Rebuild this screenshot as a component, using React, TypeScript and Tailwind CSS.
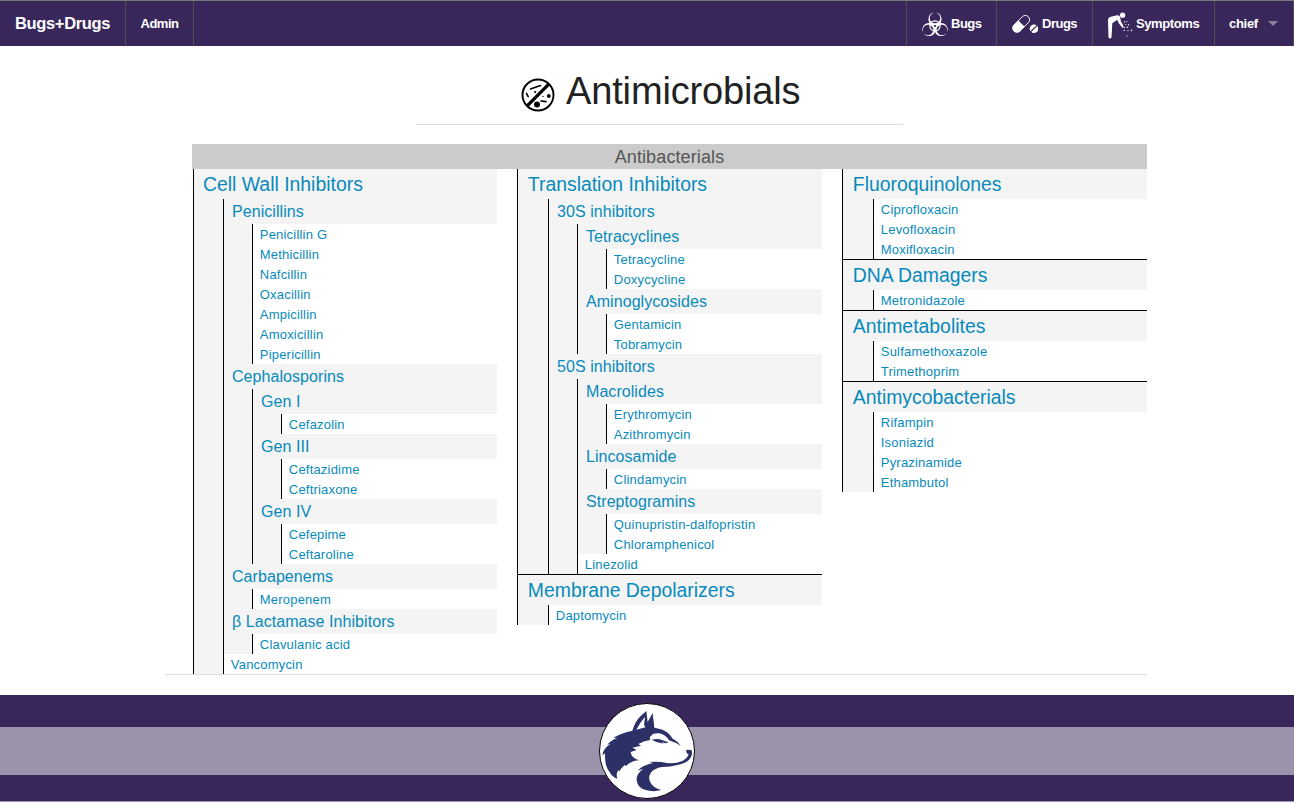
import React from "react";

type Node = { name: string; children?: Node[] };

const drugs = (...names: string[]): Node[] => names.map((name) => ({ name }));

const columns: Node[][] = [
  [
    {
      name: "Cell Wall Inhibitors",
      children: [
        {
          name: "Penicillins",
          children: drugs("Penicillin G", "Methicillin", "Nafcillin", "Oxacillin", "Ampicillin", "Amoxicillin", "Pipericillin"),
        },
        {
          name: "Cephalosporins",
          children: [
            { name: "Gen I", children: drugs("Cefazolin") },
            { name: "Gen III", children: drugs("Ceftazidime", "Ceftriaxone") },
            { name: "Gen IV", children: drugs("Cefepime", "Ceftaroline") },
          ],
        },
        { name: "Carbapenems", children: drugs("Meropenem") },
        { name: "β Lactamase Inhibitors", children: drugs("Clavulanic acid") },
        { name: "Vancomycin" },
      ],
    },
  ],
  [
    {
      name: "Translation Inhibitors",
      children: [
        {
          name: "30S inhibitors",
          children: [
            { name: "Tetracyclines", children: drugs("Tetracycline", "Doxycycline") },
            { name: "Aminoglycosides", children: drugs("Gentamicin", "Tobramycin") },
          ],
        },
        {
          name: "50S inhibitors",
          children: [
            { name: "Macrolides", children: drugs("Erythromycin", "Azithromycin") },
            { name: "Lincosamide", children: drugs("Clindamycin") },
            { name: "Streptogramins", children: drugs("Quinupristin-dalfopristin", "Chloramphenicol") },
            { name: "Linezolid" },
          ],
        },
      ],
    },
    { name: "Membrane Depolarizers", children: drugs("Daptomycin") },
  ],
  [
    { name: "Fluoroquinolones", children: drugs("Ciprofloxacin", "Levofloxacin", "Moxifloxacin") },
    { name: "DNA Damagers", children: drugs("Metronidazole") },
    { name: "Antimetabolites", children: drugs("Sulfamethoxazole", "Trimethoprim") },
    { name: "Antimycobacterials", children: drugs("Rifampin", "Isoniazid", "Pyrazinamide", "Ethambutol") },
  ],
];

function Entry({ node }: { node: Node }) {
  if (!node.children) {
    return (
      <li className="h-5 bg-white pl-[6.8px] text-[13px] leading-[21px] tracking-[0.2px]">
        <a href="#">{node.name}</a>
      </li>
    );
  }
  return (
    <li className="bg-[#f4f4f4]">
      <h4 className="h-[25px] pl-2 text-base leading-[25px] tracking-[0.06px]">
        <a href="#">{node.name}</a>
      </h4>
      <ul className="ml-7 border-l border-black">
        {node.children.map((c) => (
          <Entry key={c.name} node={c} />
        ))}
      </ul>
    </li>
  );
}

function Column({ groups, first }: { groups: Node[]; first: boolean }) {
  return (
    <div className={first ? "w-[304px]" : "w-[305px]"}>
      {groups.map((g, i) => (
        <section
          key={g.name}
          className={"border-l border-black bg-[#f4f4f4] " + (i > 0 ? "border-t" : "")}
        >
          <h3 className={"h-[30px] text-[19.4px] leading-[31px] " + (first ? "pl-[9px]" : "pl-[9.8px]")}>
            <a href="#">{g.name}</a>
          </h3>
          <ul className={"border-l border-black " + (first ? "ml-[29px]" : "ml-[30px]")}>
            {g.children?.map((c) => (
              <Entry key={c.name} node={c} />
            ))}
          </ul>
        </section>
      ))}
    </div>
  );
}

function BiohazardIcon() {
  const turns = ["rotate(0 13 15)", "rotate(120 13 15)", "rotate(240 13 15)"];
  return (
    <svg viewBox="0 0 26 26" className="h-[26px] w-[26px]">
      <mask id="lobes">
        <rect width="26" height="26" fill="white" />
        {turns.map((t) => (
          <g key={t} transform={t}>
            <circle cx="13" cy="7" r="5.3" fill="black" />
            <rect x="11.4" y="0" width="3.2" height="4" fill="black" />
          </g>
        ))}
        <circle cx="13" cy="15" r="1.1" fill="black" />
      </mask>
      <g mask="url(#lobes)" fill="white">
        {turns.map((t) => (
          <circle key={t} cx="13" cy="8" r="6.6" transform={t} />
        ))}
      </g>
      <circle cx="13" cy="15" r="5.1" fill="none" stroke="white" strokeWidth="1.2" />
    </svg>
  );
}

function PillIcon() {
  return (
    <svg viewBox="0 0 26 20" className="h-5 w-[26px]">
      <g transform="rotate(-45 9.2 9.8)">
        <rect x="-0.9" y="5.6" width="20.2" height="8.4" rx="4.2" fill="none" stroke="white" strokeWidth="0.9" />
        <path d="M9.5 5.2H3.3a4.6 4.6 0 0 0 0 9.2h6.2z" fill="white" />
      </g>
      <circle cx="22" cy="14.8" r="4.3" fill="white" />
      <path d="M18.3 18L25.5 11.2" stroke="#39275b" strokeWidth="1.1" />
    </svg>
  );
}

function SymptomsIcon() {
  return (
    <svg viewBox="0 0 26 27" className="mt-[3px] h-[27px] w-[26px]" fill="white">
      <circle cx="15.6" cy="3.2" r="2.6" />
      <path d="M1 7.8Q1.2 5.4 3.7 4.7L10.4 3.2Q12.5 3 13 4.7L14 9.4L16.6 14.2Q17.2 16 15.3 15.8L11.5 10.8L10.3 7.7L5.3 11.2L4.5 25.4Q3 27.6 1.5 25.5Z" />
      <g opacity="0.9">
        <circle cx="17.6" cy="10" r=".65" />
        <circle cx="19.8" cy="9.6" r=".6" />
        <circle cx="18.7" cy="12.5" r=".6" />
        <circle cx="21.5" cy="12.8" r=".7" />
        <circle cx="17.6" cy="15.7" r=".6" />
        <circle cx="20.3" cy="15.2" r=".8" />
        <circle cx="17.3" cy="18.4" r=".7" />
        <circle cx="21" cy="18.7" r=".6" />
        <circle cx="24.5" cy="18.4" r=".8" />
        <circle cx="20" cy="23.9" r=".6" />
      </g>
    </svg>
  );
}

function NoMicrobesIcon() {
  return (
    <svg viewBox="0 0 34 34" className="h-[34px] w-[34px]" fill="none" stroke="black" strokeLinecap="round">
      <circle cx="17" cy="17" r="15.5" strokeWidth="1.9" />
      <path d="M6.2 27.8L27.8 6.2" strokeWidth="3.3" strokeLinecap="butt" />
      <path d="M9.5 11L19.5 7.5M5.5 15.3L7.2 18.6M20 23L25 23.6" strokeWidth="1.6" />
      <g fill="black" stroke="none">
        <circle cx="14.2" cy="14" r="1.1" />
        <circle cx="27.8" cy="18" r="1.9" />
        <circle cx="16" cy="26.6" r="3" />
        <circle cx="22" cy="18.4" r=".7" />
      </g>
    </svg>
  );
}

function HuskyLogo() {
  return (
    <svg viewBox="42 39 288 288" className="h-24 w-24">
      <circle cx="186" cy="183" r="142.5" fill="white" stroke="black" strokeWidth="3" />
      <g fill="#2b3067">
        <path d="M184 63L188 96L203 69L208 113L222 116Q244 121 255 135L263 146Q277 152 287 168Q272 157 252 151Q241 133 222 130Q204 129 199 137Q191 142 196 150Q178 152 160 162L168 167L142 173L155 180L137 186Q139 205 163 211Q138 212 122 229L120 224Q106 236 104 244L100 241Q92 252 97 267Q79 258 74 246Q59 230 60 190L52 196Q55 174 77 161L67 164Q78 150 98 143L84 144Q104 130 142 122Q151 92 168 77Z" />
        <path d="M200 149Q219 144 233 151Q241 154 251 157L242 160L229 156L236 161Q216 159 200 149Z" />
        <path d="M303 180Q315 178 320 181Q323 193 318 201Q310 218 281 224Q254 231 231 231Q207 235 197 249Q187 266 199 282Q209 296 229 300Q205 307 182 300Q158 294 155 271Q153 252 175 236L158 242Q169 227 204 219L192 216Q224 214 245 219Q271 222 294 212Q305 207 311 194Q303 190 303 180Z" />
      </g>
      <path d="M180 80L177 104L181 112L154 119Q164 99 180 80Z" fill="white" />
    </svg>
  );
}

const navItem = "flex items-center border-l border-[#4c4e4c] text-[13px] font-bold tracking-[-0.5px] h-full";

export default function App() {
  return (
    <div className="flex h-[802px] w-[1294px] flex-col overflow-hidden bg-white font-['Liberation_Sans',Arial,sans-serif] text-[#222]">
      <nav className="flex h-[46px] shrink-0 justify-between border-t border-[#777] bg-[#39275b] text-white">
        <div className="flex h-full">
          <a href="#" className="flex w-[125px] items-center pl-[15px] text-[16.5px] font-bold tracking-[-0.35px]">
            Bugs+Drugs
          </a>
          <a href="#" className={navItem + " w-[69px] border-r pl-[14.5px]"}>
            Admin
          </a>
        </div>
        <div className="flex h-full">
          <a href="#" className={navItem + " w-[90px] pl-[15px]"}>
            <BiohazardIcon />
            <span className="ml-[3px]">Bugs</span>
          </a>
          <a href="#" className={navItem + " w-24 pl-[15px]"}>
            <PillIcon />
            <span className="ml-1">Drugs</span>
          </a>
          <a href="#" className={navItem + " w-[122px] pl-3.5"}>
            <SymptomsIcon />
            <span className="ml-[3px] tracking-[-0.4px]">Symptoms</span>
          </a>
          <a href="#" className={navItem + " w-20 border-r pl-[14px]"}>
            <span className="tracking-[-0.3px]">chief</span>
            <svg viewBox="0 0 10 5" className="ml-2.5 h-[5px] w-2.5">
              <path d="M0 0H10L5 5Z" fill="#887d9c" />
            </svg>
          </a>
        </div>
      </nav>

      <header className="ml-[416px] flex h-[79px] w-[487px] shrink-0 border-b border-[#ddd] pl-[104.5px] pt-[25px]">
        <div className="mt-[6.5px]">
          <NoMicrobesIcon />
        </div>
        <h1 className="ml-[11.5px] text-[38px] leading-[41px] tracking-[-0.15px]">Antimicrobials</h1>
      </header>

      <main className="ml-[165px] mt-[19px] h-[531px] w-[982px] shrink-0 border-b border-[#ddd] pl-[27px]">
        <h2 className="h-[25px] bg-[#cbcbcb] text-center text-[18px] leading-[26px] tracking-[0.12px] text-[#555]">
          Antibacterials
        </h2>
        <div className="flex items-start justify-between pl-px text-[#078abb]">
          {columns.map((groups, i) => (
            <Column key={groups[0].name} groups={groups} first={i === 0} />
          ))}
        </div>
      </main>

      <footer className="mt-5 flex h-[107px] shrink-0 flex-col border-b border-[#9b93ab] bg-[#39275b] pt-8">
        <div className="flex h-12 items-center justify-center bg-[#9b93ab]">
          <div className="shrink-0">
            <HuskyLogo />
          </div>
        </div>
      </footer>
    </div>
  );
}
